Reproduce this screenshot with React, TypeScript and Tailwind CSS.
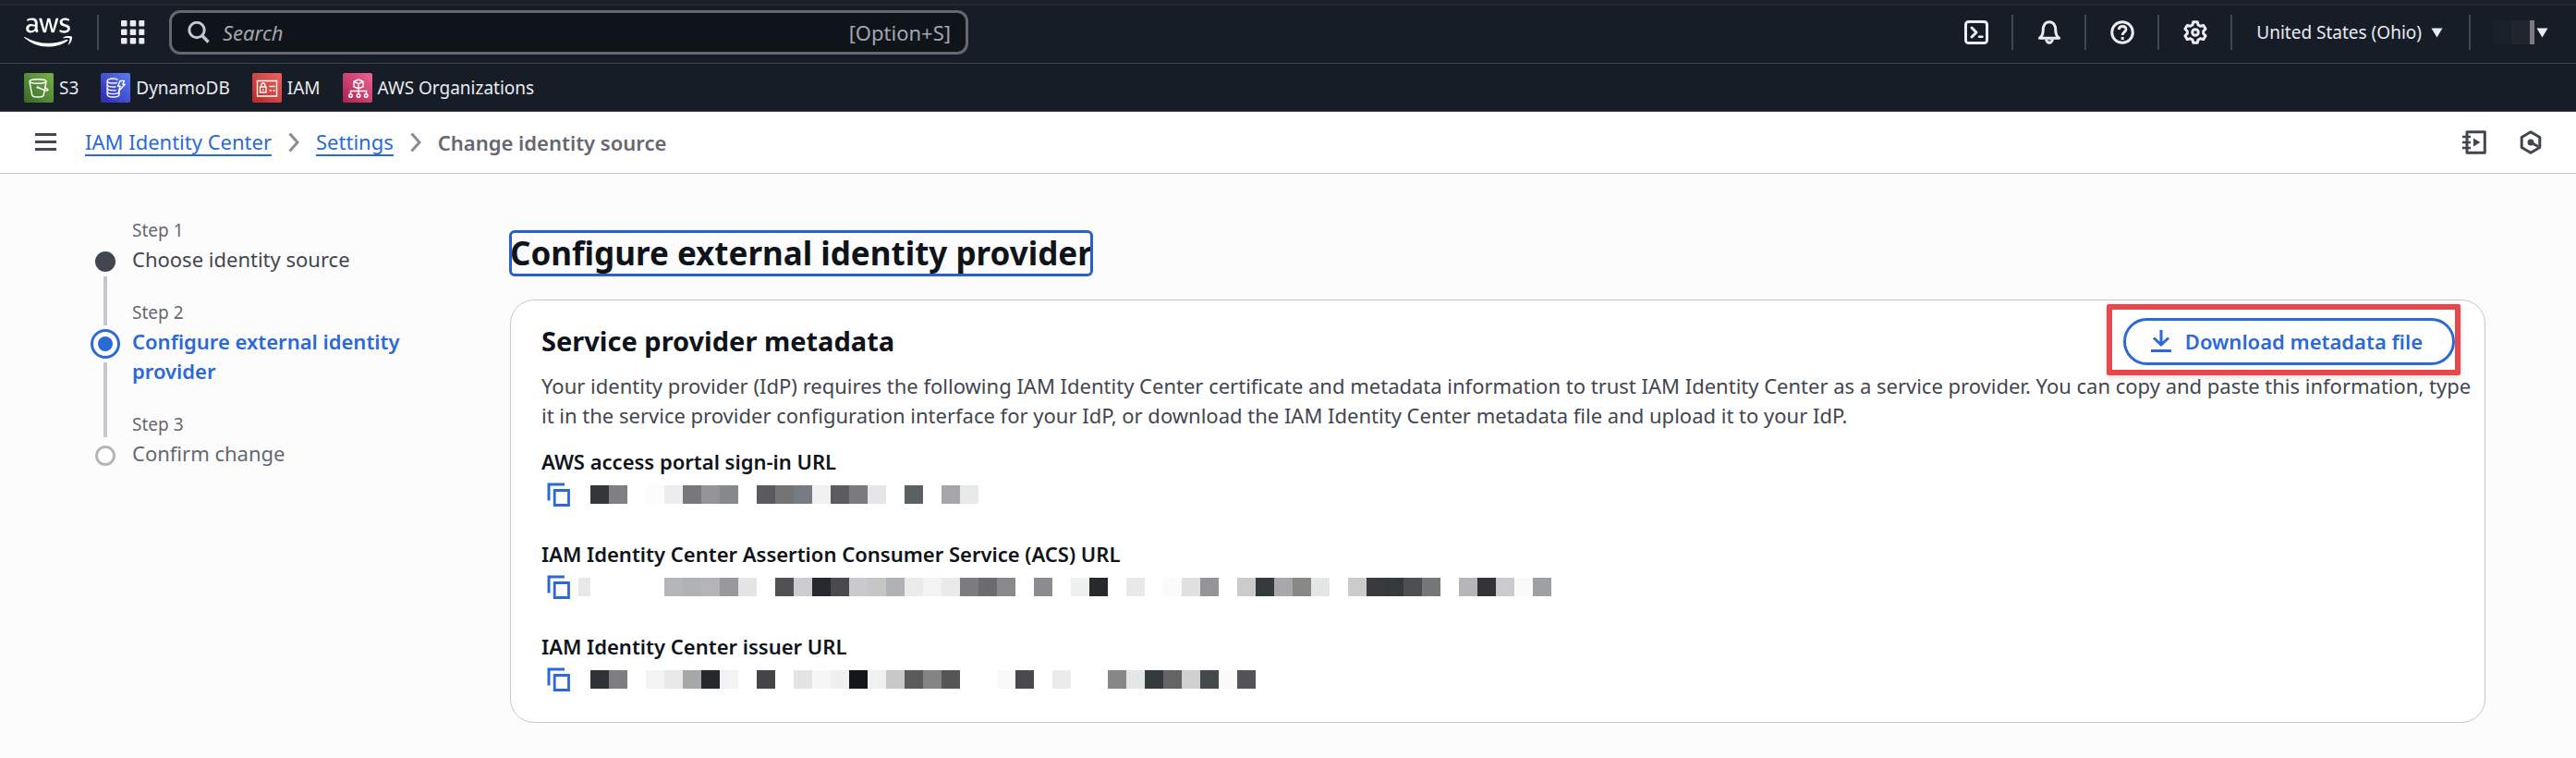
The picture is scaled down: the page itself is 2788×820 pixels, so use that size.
import { Fragment, type ReactNode } from "react";
import { FaAws } from "react-icons/fa";

type Cell = string | null;

const PORTAL: Cell[] = [
  "#33363b", "#808082", null, "#fcfcfc", "#ededed", "#77777c", "#949597", "#87888a", null, "#5b5b5d", "#737476",
  "#777c82", "#f1f1f1", "#5c5c5e", "#7b7b7d", "#e6e6e6", null, "#5b6063", null, "#a6a6a9", "#e8e9e9",
];

const ACS: Cell[] = [
  null, null, null, null, "#b5b6b9", "#b1b2b5", "#b4b5b8", "#99999b", "#e4e5e4", null, "#505153", "#cdcdd1",
  "#26292d", "#4a4a4e", "#c9cacd", "#c5c6c5", "#b1b2b4", "#ebebeb", "#f2f4f3", "#e9eae9", "#7c7c7e", "#6c6c70",
  "#88898b", null, "#8c8c8e", null, "#eff0f0", "#262a2d", null, "#e9e9e9", null, "#fbfbfb", "#e1e1e1", "#939496",
  null, "#cacbca", "#353a3d", "#a8a8aa", "#888887", "#e4e6e5", null, "#cbcbcb", "#3a3a3e", "#34393c", "#4d4e50",
  "#767778", null, "#b6b6b9", "#343437", "#cbcbce", "#fafafa", "#9fa0a2",
];

const ISSUER: Cell[] = [
  "#2f3237", "#7e7e80", null, "#f2f4f3", "#e8e8e8", "#a6a7a9", "#26292c", "#f3f3f3", null, "#444549", null,
  "#e3e3e3", "#f7f7f7", "#f0f0f0", "#13161a", "#f0f1f0", "#c7c8ca", "#5a5b5d", "#848486", "#555658", null, null,
  "#f9f9f9", "#4a4a4e", null, "#ebebeb", null, null, "#878789", "#e5e7e6", "#353a3d", "#646466", "#cfd0cf",
  "#44494c", "#fafafa", "#545458",
];

function Redacted({ cells, lead }: { cells: Cell[]; lead?: boolean }) {
  return (
    <span className="flex" aria-hidden="true">
      <span className={lead ? "h-5 w-[13px] bg-[#e8e8e8]" : "h-5 w-[13px]"} />
      {cells.map((c, i) => (
        <span key={i} className="h-5 w-5" style={{ background: c ?? "transparent" }} />
      ))}
    </span>
  );
}

function CopyIcon() {
  return (
    <svg viewBox="0 0 26 26" className="h-[26px] w-[26px]" fill="none" stroke="#2b69d9" strokeWidth="3">
      <path d="M19 2H2V19.500" />
      <path d="M8.200 8.500H23.500V24.500H8.200Z" strokeWidth="2.800" />
    </svg>
  );
}

function Field({ label, cells, lead }: { label: string; cells: Cell[]; lead?: boolean }) {
  return (
    <div className="flex flex-col">
      <dt className="h-9 text-[22px] leading-8 font-semibold text-[#0f141a]">{label}</dt>
      <dd className="flex h-8 items-center pl-1.5">
        <button type="button" aria-label={`Copy ${label}`} className="mr-2 block">
          <CopyIcon />
        </button>
        <Redacted cells={cells} lead={lead} />
      </dd>
    </div>
  );
}

function S3Icon() {
  return (
    <svg viewBox="0 0 32 32" className="h-8 w-8 rounded-xs" fill="none" stroke="#fff" strokeWidth="1.400">
      <defs>
        <linearGradient id="gs3" x1="0" y1="1" x2="1" y2="0">
          <stop stopColor="#356a24" />
          <stop offset="1" stopColor="#7ab04b" />
        </linearGradient>
      </defs>
      <rect width="32" height="32" fill="url(#gs3)" stroke="none" />
      <ellipse cx="15" cy="9" rx="9" ry="2.300" />
      <path d="M6 9.500L8.800 24c.4 1.400 3 2 6.200 2s5.800-.6 6.200-2L24 9.500" />
      <path d="M15 15.500l6.500 2.800c2.500 1 4.500 1 4.500 0s-1.500-1.500-3.400-2.500" />
      <circle cx="14.800" cy="15.500" r="1.300" fill="#fff" stroke="none" />
    </svg>
  );
}

function DynamoIcon() {
  return (
    <svg viewBox="0 0 32 32" className="h-8 w-8 rounded-xs" fill="none" stroke="#fff" strokeWidth="1.400">
      <defs>
        <linearGradient id="gddb" x1="0" y1="1" x2="1" y2="0">
          <stop stopColor="#2e27ad" />
          <stop offset="1" stopColor="#5b7df5" />
        </linearGradient>
      </defs>
      <rect width="32" height="32" fill="url(#gddb)" stroke="none" />
      <path d="M18.500 7.500C17.500 6.500 15.800 6 13.500 6 9.800 6 7.200 7 7.200 8.500s2.600 2.500 6.300 2.500c1.800 0 3.400-.2 4.500-.7" />
      <path d="M7.200 8.500V23.300C7.200 25 9.800 26 13.500 26s6.500-1 6.500-2.700V20" />
      <path d="M7.200 12.500c0 1.600 2.600 2.600 6.300 2.600 1 0 2-.1 2.800-.3M7.200 16.300c0 1.600 2.600 2.600 6.300 2.600 1.200 0 2.300-.1 3.200-.3M7.200 20c0 1.600 2.600 2.600 6.300 2.600s6.500-1 6.500-2.600" />
      <path d="M21 8.500h4.500l-1.700 3.700h2.400l-6.700 7.300 1.600-5.300h-2.500z" strokeLinejoin="round" />
    </svg>
  );
}

function IamIcon() {
  return (
    <svg viewBox="0 0 32 32" className="h-8 w-8 rounded-xs" fill="none" stroke="#fff" strokeWidth="1.400">
      <defs>
        <linearGradient id="giam" x1="0" y1="1" x2="1" y2="0">
          <stop stopColor="#b52a2a" />
          <stop offset="1" stopColor="#f0635c" />
        </linearGradient>
      </defs>
      <rect width="32" height="32" fill="url(#giam)" stroke="none" />
      <path d="M5.500 8.500h21v16.500h-21z" />
      <path d="M8.500 15h6.500v6H8.500zM9.800 15v-2a2 2 0 0 1 4 0v2M11.800 17.200v2M18.500 14.500h6M18.500 19h2.500M22.500 19h2" />
    </svg>
  );
}

function OrgIcon() {
  return (
    <svg viewBox="0 0 32 32" className="h-8 w-8 rounded-xs" fill="none" stroke="#fff" strokeWidth="1.400">
      <defs>
        <linearGradient id="gorg" x1="0" y1="1" x2="1" y2="0">
          <stop stopColor="#a92352" />
          <stop offset="1" stopColor="#f06292" />
        </linearGradient>
      </defs>
      <rect width="32" height="32" fill="url(#gorg)" stroke="none" />
      <path d="M17 7l5 2.300v5.400L17 17l-5-2.300V9.300zM12 9.300l5 2.400 5-2.400M17 11.700V22.500M8.500 22.500V19.500h17v3" />
      <circle cx="8.500" cy="24.500" r="1.800" />
      <circle cx="17" cy="24.500" r="1.800" />
      <circle cx="25.200" cy="24.500" r="1.800" />
    </svg>
  );
}

const FAVORITES: { name: string; icon: ReactNode }[] = [
  { name: "S3", icon: <S3Icon /> },
  { name: "DynamoDB", icon: <DynamoIcon /> },
  { name: "IAM", icon: <IamIcon /> },
  { name: "AWS Organizations", icon: <OrgIcon /> },
];

const STROKE = {
  viewBox: "0 0 26 26",
  className: "h-[26px] w-[26px]",
  fill: "none",
  stroke: "currentColor",
  strokeWidth: 3,
  strokeLinejoin: "round" as const,
};

const TOOLS: { name: string; icon: ReactNode }[] = [
  {
    name: "CloudShell",
    icon: (
      <svg {...STROKE}>
        <rect x="1.500" y="1.500" width="23" height="23" rx="3" strokeWidth="3" />
        <path d="M8 8l5 5-5 5" strokeLinecap="round" />
        <path d="M16 17.800h3.500" strokeLinecap="round" strokeWidth="2.500" />
      </svg>
    ),
  },
  {
    name: "Notifications",
    icon: (
      <svg {...STROKE}>
        <path d="M2.500 19.300c2.600-2 3.700-4.300 3.700-8.300 0-5.600 2.600-9.300 6.800-9.300s6.800 3.700 6.800 9.300c0 4 1.100 6.300 3.700 8.300z" />
        <path d="M8 20.500h10c-.7 3.200-2.400 5.300-5 5.300s-4.300-2.100-5-5.300z" fill="currentColor" stroke="none" />
        <path d="M11.500 21.800h3" stroke="#161d26" strokeWidth="1.200" />
      </svg>
    ),
  },
  {
    name: "Support",
    icon: (
      <svg {...STROKE}>
        <circle cx="13" cy="13" r="11.300" />
        <path d="M9.200 10.200c.2-2.400 1.700-3.700 3.900-3.700 2.300 0 3.900 1.400 3.900 3.300 0 2.700-3.800 2.900-3.800 6.200" strokeWidth="2.800" />
        <path d="M11.700 18h3v3h-3z" fill="currentColor" stroke="none" />
      </svg>
    ),
  },
  {
    name: "Settings",
    icon: (
      <svg {...STROKE}>
        <path
          d="M10.800 1.700h4.400l.9 3.300 2.300 1.300 3.300-.9 2.400 3.800-2.400 2.600v2.400l2.400 2.600-2.400 3.800-3.300-.9-2.300 1.300-.9 3.300h-4.400l-.9-3.300-2.300-1.300-3.300.9-2.400-3.800 2.400-2.600v-2.400L1.900 9.200l2.400-3.800 3.300.9 2.300-1.300z"
        />
        <circle cx="13" cy="13" r="3.300" />
      </svg>
    ),
  },
];

function Triangle() {
  return (
    <svg viewBox="0 0 13 11" className="h-[11px] w-[13px] text-[#ebebf0]">
      <path d="M.5.500h12L6.500 10.500z" fill="currentColor" />
    </svg>
  );
}

function Divider() {
  return <span className="h-[38px] w-0.5 shrink-0 bg-[#424650]" />;
}

function Header() {
  return (
    <header className="bg-[#161d26] text-[#ebebf0]">
      <div className="h-1.5 border-b-2 border-[#232831] bg-[#1a1f28]" />
      <div className="flex h-[63px] items-center border-b border-[#424650] pr-[30px] pb-1 pl-[26px]">
        <a href="#home" aria-label="AWS home" className="mr-[27px] text-white">
          <FaAws className="h-[42px] w-[52px]" />
        </a>
        <Divider />
        <button type="button" aria-label="Services" className="mr-[26px] ml-6">
          <svg viewBox="0 0 26 26" className="h-[26px] w-[26px]" fill="currentColor">
            {[0, 9.5, 19].map((y) => (
              <Fragment key={y}>
                <rect x="0" y={y} width="6.500" height="6.500" rx="1" />
                <rect x="9.700" y={y} width="6.500" height="6.500" rx="1" />
                <rect x="19.300" y={y} width="6" height="6.500" rx="1" />
              </Fragment>
            ))}
          </svg>
        </button>
        <label className="mr-auto flex h-12 w-[865px] items-center rounded-xl border-3 border-[#656871] bg-[#0f141a] pr-4 pl-[17px]">
          <svg viewBox="0 0 24 24" className="mr-3.5 h-6 w-6 shrink-0" fill="none" stroke="#c6c6cd" strokeWidth="3">
            <circle cx="10" cy="9.500" r="8.200" />
            <path d="M15.800 15.500L22.500 22.500" strokeWidth="3.500" />
          </svg>
          <input
            aria-label="Search"
            placeholder="Search"
            className="min-w-0 flex-1 bg-transparent text-[22px] leading-8 italic outline-none placeholder:text-[#a4a4ad]"
          />
          <span className="text-[22px] leading-8 text-[#a4a4ad]">[Option+S]</span>
        </label>
        {TOOLS.map((t) => (
          <Fragment key={t.name}>
            <button type="button" aria-label={t.name} className="mr-[25px] ml-[26px] block">
              {t.icon}
            </button>
            <Divider />
          </Fragment>
        ))}
        <button type="button" className="mr-7 ml-[26px] flex items-center gap-2.5 text-[19px] leading-8">
          United States (Ohio)
          <Triangle />
        </button>
        <Divider />
        <button type="button" aria-label="Account" className="ml-6 flex items-center gap-0.5">
          <span className="flex">
            <span className="h-[26px] w-5 bg-[#1a2029]" />
            <span className="h-[26px] w-5 bg-[#21252e]" />
            <span className="h-[26px] w-[5px] bg-[#7c7a80]" />
          </span>
          <Triangle />
        </button>
      </div>
      <nav aria-label="Favorites" className="flex h-[52px] items-center gap-6 border-b border-[#424650] pl-[26px]">
        {FAVORITES.map((f) => (
          <a key={f.name} href={`#${f.name}`} className="flex items-center gap-1.5 text-[19px] leading-8">
            {f.icon}
            {f.name}
          </a>
        ))}
      </nav>
    </header>
  );
}

function Chevron() {
  return (
    <svg viewBox="0 0 12 22" className="mx-[18px] h-[22px] w-3" fill="none" stroke="#8c8c94" strokeWidth="3">
      <path d="M1.500 1.500L10 11 1.500 20.500" />
    </svg>
  );
}

function BreadcrumbBar() {
  return (
    <div className="flex h-[67px] items-center border-b border-[#c6c6cd] bg-white pr-9 pl-[38px] text-[22px] leading-7 text-[#424650]">
      <button type="button" aria-label="Open navigation" className="mr-[30px]">
        <svg viewBox="0 0 24 20" className="h-5 w-6" fill="none" stroke="currentColor" strokeWidth="3">
          <path d="M0 1.500h23M0 9.500h23M0 17.500h23" />
        </svg>
      </button>
      <nav aria-label="Breadcrumbs" className="mr-auto flex items-center">
        <a href="#center" className="border-b-2 border-[#2b69d9] text-[#2b69d9]">
          IAM Identity Center
        </a>
        <Chevron />
        <a href="#settings" className="border-b-2 border-[#2b69d9] text-[#2b69d9]">
          Settings
        </a>
        <Chevron />
        <span className="font-semibold text-[#656871]">Change identity source</span>
      </nav>
      <button type="button" aria-label="Tutorials" className="mr-[35px]">
        <svg {...STROKE}>
          <path d="M5 1.800h19.300v22.400H5z" />
          <path d="M0 7h9M0 13h9M0 19h9" strokeWidth="2.600" />
          <path d="M12 8.500l7.500 4.500-7.500 4.500z" fill="currentColor" stroke="none" />
        </svg>
      </button>
      <button type="button" aria-label="Amazon Q">
        <svg {...STROKE}>
          <path d="M13 1.800l9.800 5.700v11L13 24.200 3.200 18.500v-11z" />
          <circle cx="13" cy="13" r="3.500" fill="currentColor" stroke="none" />
          <path d="M13 13l8 4.500" />
        </svg>
      </button>
    </div>
  );
}

type StepState = "done" | "current" | "todo";

const STEPS: { title: string; state: StepState }[] = [
  { title: "Choose identity source", state: "done" },
  { title: "Configure external identity provider", state: "current" },
  { title: "Confirm change", state: "todo" },
];

const TITLE_STYLE: Record<StepState, string> = {
  done: "text-[#424650]",
  current: "font-semibold text-[#2b69d9]",
  todo: "text-[#656871]",
};

function StepDot({ state }: { state: StepState }) {
  return (
    <svg viewBox="0 0 32 32" className="h-8 w-8 shrink-0">
      {state === "done" && <circle cx="16" cy="16" r="11" fill="#424650" />}
      {state === "current" && (
        <>
          <circle cx="16" cy="16" r="14.500" fill="#fff" stroke="#2b69d9" strokeWidth="3" />
          <circle cx="16" cy="16" r="8" fill="#2b69d9" />
        </>
      )}
      {state === "todo" && <circle cx="16" cy="16" r="9.500" fill="#fff" stroke="#b4b4bb" strokeWidth="3" />}
    </svg>
  );
}

function Steps() {
  return (
    <nav aria-label="Steps" className="w-[454px] shrink-0 pt-px pr-[110px]">
      <ol>
        {STEPS.map((s, i) => (
          <li key={s.title} className="flex gap-[13px]">
            <div className="flex w-8 shrink-0 flex-col items-center">
              <span className={i > 0 ? "mb-1 h-6 w-1 bg-[#c6c6cd]" : "mb-1 h-6 w-1"} />
              <StepDot state={s.state} />
              {i < STEPS.length - 1 && (
                <span className={i > 0 ? "mt-1 w-1 flex-1 bg-[#c6c6cd]" : "w-1 flex-1 bg-[#c6c6cd]"} />
              )}
            </div>
            <div className={i < STEPS.length - 1 ? "pb-8" : ""}>
              <p className="h-[25px] text-[19px] leading-[21px] text-[#656871]">Step {i + 1}</p>
              <p className={`text-[22px] leading-8 ${TITLE_STYLE[s.state]}`}>{s.title}</p>
            </div>
          </li>
        ))}
      </ol>
    </nav>
  );
}

export default function App() {
  return (
    <div className="min-h-screen bg-[#fcfcfd] font-['Noto_Sans','Open_Sans',sans-serif]">
      <Header />
      <BreadcrumbBar />
      <div className="flex px-[98px] pt-[50px] pb-[38px]">
        <Steps />
        <main className="min-w-0 flex-1 pt-3">
          <h1 className="w-fit rounded-[5px] text-[35px] leading-[48px] font-bold text-[#0f141a] outline-3 -outline-offset-2 outline-[#2760cb]">
            Configure external identity provider
          </h1>
          <section className="mt-[26px] rounded-[26px] border border-[#c6c6cd] bg-white pb-[30px] pl-[33px]">
            <div className="flex items-start justify-between pr-[26px]">
              <h2 className="pt-6 text-[29px] leading-10 font-bold text-[#0f141a]">Service provider metadata</h2>
              <div className="mt-1 rounded-xs border-6 border-[#e8484b] pt-[9px] pb-[5px] pl-3 shadow-[0_2px_5px_rgba(0,0,0,0.15)]">
                <button
                  type="button"
                  className="flex h-[51px] items-center gap-3.5 rounded-full border-3 border-[#2b69d9] pr-8 pb-0.5 pl-[26px] text-[22px] leading-8 font-semibold text-[#2b69d9]"
                >
                  <svg viewBox="0 0 24 24" className="h-6 w-6" fill="none" stroke="currentColor" strokeWidth="3">
                    <path d="M12 0v15M4 8.500l8 7.500 8-7.500M1 22.500h22" />
                  </svg>
                  Download metadata file
                </button>
              </div>
            </div>
            <p className="-mt-[5px] pr-3 text-[22px] leading-8 text-[#424650]">
              Your identity provider (IdP) requires the following IAM Identity Center certificate and metadata
              information to trust IAM Identity Center as a service provider. You can copy and paste this information,
              type it in the service provider configuration interface for your IdP, or download the IAM Identity Center
              metadata file and upload it to your IdP.
            </p>
            <dl className="mt-[18px] flex flex-col gap-8">
              <Field label="AWS access portal sign-in URL" cells={PORTAL} />
              <Field label="IAM Identity Center Assertion Consumer Service (ACS) URL" cells={ACS} lead />
              <Field label="IAM Identity Center issuer URL" cells={ISSUER} />
            </dl>
          </section>
        </main>
      </div>
    </div>
  );
}
